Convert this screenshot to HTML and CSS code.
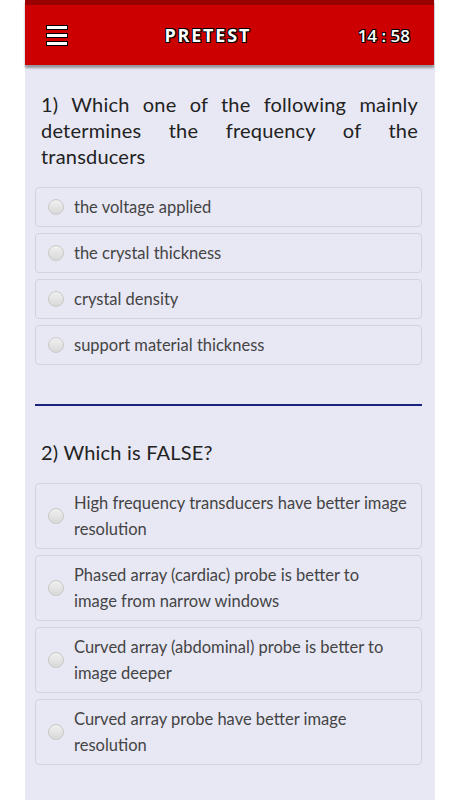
FILE: index.html
```html
<!DOCTYPE html>
<html>
<head>
<meta charset="utf-8">
<link rel="stylesheet" href="styles.css">
</head>
<body>
<div class="app">
  <header class="topbar">
    <div class="menu"><span></span><span></span><span></span></div>
    <div class="title">PRETEST</div>
    <div class="timer">14 : 58</div>
  </header>
  <main class="content">
    <section class="question">
      <p class="qtext">1) Which one of the following mainly determines the frequency of the transducers</p>
      <label class="option"><span class="radio"></span><span class="otext">the voltage applied</span></label>
      <label class="option"><span class="radio"></span><span class="otext">the crystal thickness</span></label>
      <label class="option"><span class="radio"></span><span class="otext">crystal density</span></label>
      <label class="option"><span class="radio"></span><span class="otext">support material thickness</span></label>
    </section>
    <hr class="divider">
    <section class="question">
      <p class="qtext">2) Which is FALSE?</p>
      <label class="option tall"><span class="radio"></span><span class="otext">High frequency transducers have better image resolution</span></label>
      <label class="option tall"><span class="radio"></span><span class="otext">Phased array (cardiac) probe is better to<br>image from narrow windows</span></label>
      <label class="option tall"><span class="radio"></span><span class="otext">Curved array (abdominal) probe is better to image deeper</span></label>
      <label class="option tall"><span class="radio"></span><span class="otext">Curved array probe have better image resolution</span></label>
    </section>
  </main>
</div>
</body>
</html>
```
FILE: styles.css
```css
html, body {
  margin: 0;
  padding: 0;
  background: #ffffff;
  height: 100%;
}
body {
  font-family: "Lato", "Open Sans", sans-serif;
}
.app {
  width: 410px;
  margin-left: 25px;
  min-height: 800px;
  background: #e8e8f4;
}
.topbar {
  height: 60px;
  border-top: 5px solid #990000;
  background: #cc0000;
  box-shadow: 0 3px 2px rgba(0, 0, 0, 0.35);
  display: flex;
  align-items: center;
  justify-content: space-between;
  padding: 0 24px 0 21px;
  box-sizing: content-box;
  margin-right: 1px;
}
.menu {
  display: flex;
  flex-direction: column;
  gap: 3px;
  width: 22px;
}
.menu span {
  display: block;
  height: 3px;
  background: #fff;
  border: 1px solid #000;
}
.title, .timer {
  color: #fff;
  font-weight: bold;
  font-family: "Open Sans", sans-serif;
  text-shadow: -1px -1px 0 #000, 1px -1px 0 #000, -1px 1px 0 #000, 1px 1px 0 #000;
}
.title {
  font-size: 18px;
  letter-spacing: 1.8px;
  margin-left: -10px;
}
.timer {
  font-size: 17px;
  font-weight: 600;
}
.content {
  padding: 26px 13px 30px 10px;
}
.question {
  display: flex;
  flex-direction: column;
  gap: 6px;
}
.qtext {
  margin: 0 4px 12px 6px;
  font-size: 20px;
  line-height: 26px;
  color: #222;
  text-align: justify;
  letter-spacing: 0.2px;
}
.option {
  display: flex;
  align-items: center;
  gap: 10px;
  min-height: 38px;
  border: 1px solid #d2d2de;
  border-radius: 4px;
  padding: 0 13px 0 12px;
  color: #444;
  font-size: 16.5px;
  line-height: 26px;
}
.option.tall {
  padding: 6px 13px 6px 12px;
}
.radio {
  flex: none;
  width: 14px;
  height: 14px;
  border-radius: 50%;
  border: 1px solid #c8c8c8;
  background: linear-gradient(#f0f0f0, #d8d8d8);
}
.divider {
  border: 0;
  height: 2px;
  background: #1a237e;
  margin: 39px 0 33px;
}
```
